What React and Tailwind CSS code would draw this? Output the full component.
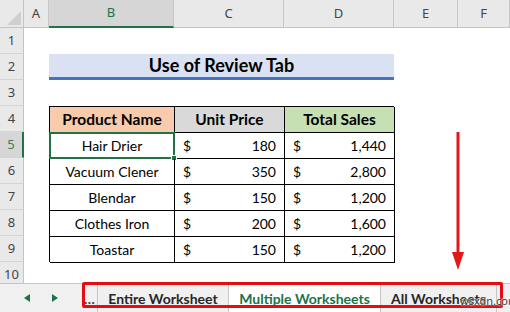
import React from 'react'

const rows = [
  { name: 'Hair Drier', price: '180', total: '1,440' },
  { name: 'Vacuum Clener', price: '350', total: '2,800' },
  { name: 'Blendar', price: '150', total: '1,200' },
  { name: 'Clothes Iron', price: '200', total: '1,600' },
  { name: 'Toastar', price: '150', total: '1,200' },
]

const colHeads = [
  { label: 'A', active: false },
  { label: 'B', active: true },
  { label: 'C', active: false },
  { label: 'D', active: false },
  { label: 'E', active: false },
  { label: 'F', active: false },
]

const cellFont = { fontFamily: 'Lato, "Open Sans", sans-serif' }

const App = () => {
  return (
    <div className="w-[510px] h-[312px] overflow-hidden bg-white flex flex-col relative" style={{ fontFamily: '"Noto Sans", "Open Sans", sans-serif' }}>
      {/* sheet area */}
      <div className="h-[283px] overflow-hidden grid grid-cols-[24px_25px_125px_110px_110px_64px_52px] grid-rows-[28px_repeat(10,26px)]">
        {/* corner */}
        <div className="bg-[#e9e9e9] border-r border-b border-[#c4c4c4] flex items-end justify-end pr-[2px] pb-[2px]">
          <svg width="14" height="14" viewBox="0 0 14 14">
            <polygon points="14,0 14,14 0,14" fill="#cfcfcf" />
          </svg>
        </div>
        {colHeads.map((c) => (
          <div
            key={c.label}
            className={`flex items-center justify-center text-[13px] border-r border-[#c8c8c8] ${
              c.active
                ? 'bg-[#d6d6d6] text-[#217346] border-b-2 border-b-[#217346]'
                : 'bg-[#e9e9e9] text-[#444] border-b border-b-[#c4c4c4]'
            }`}
          >
            {c.label}
          </div>
        ))}

        {/* row headers */}
        {Array.from({ length: 10 }, (_, i) => (
          <div
            key={i}
            style={{ gridRowStart: i + 2, gridColumnStart: 1 }}
            className={`flex items-center justify-center text-[13px] border-b border-[#d4d4d4] ${
              i === 4
                ? 'bg-[#d6d6d6] text-[#3d7a55] border-r-2 border-r-[#217346]'
                : 'bg-[#e9e9e9] text-[#444] border-r border-r-[#c4c4c4]'
            }`}
          >
            {i + 1}
          </div>
        ))}

        {/* title B2:D2 */}
        <div className="row-start-3 col-start-3 col-span-3 bg-[#d9e1f2] border-b-[3px] border-[#4472c4] flex items-center justify-center text-[18px] font-bold text-black" style={cellFont}>
          Use of Review Tab
        </div>

        {/* table B4:D9 */}
        <div className="row-start-5 row-span-6 col-start-3 col-span-3 grid grid-cols-[125px_110px_110px] grid-rows-[repeat(6,26px)] border-t border-l border-black text-[14px] text-black" style={cellFont}>
          <div className="bg-[#f8cbad] border-r border-b border-black flex items-center justify-center font-bold text-[15.5px]">Product Name</div>
          <div className="bg-[#d9d9d9] border-r border-b border-black flex items-center justify-center font-bold text-[15.5px]">Unit Price</div>
          <div className="bg-[#c6e0b4] border-r border-b border-black flex items-center justify-center font-bold text-[15.5px]">Total Sales</div>
          {rows.map((r, i) => (
            <React.Fragment key={r.name}>
              <div className="relative border-r border-b border-black flex items-center justify-center">
                {r.name}
                {i === 0 && (
                  <div className="absolute -left-[1px] -top-[1px] -right-[1px] -bottom-[1px] border-2 border-[#217346]">
                    <div className="absolute -right-[4px] -bottom-[4px] w-[6px] h-[6px] bg-[#217346] border border-white" />
                  </div>
                )}
              </div>
              <div className="border-r border-b border-black flex items-center justify-between px-[8px]">
                <span>$</span>
                <span>{r.price}</span>
              </div>
              <div className="border-r border-b border-black flex items-center justify-between px-[8px]">
                <span>$</span>
                <span>{r.total}</span>
              </div>
            </React.Fragment>
          ))}
        </div>
      </div>

      {/* sheet tab bar */}
      <div className="flex-1 bg-[#f0f0f0] border-t border-[#c6c6c6] flex items-stretch text-[14px]" style={cellFont}>
        <div className="w-[82px] flex items-center pl-[24px] gap-[22px]">
          <svg width="6" height="8" viewBox="0 0 6 8"><polygon points="6,0 6,8 0,4" fill="#217346" /></svg>
          <svg width="6" height="8" viewBox="0 0 6 8"><polygon points="0,0 0,8 6,4" fill="#217346" /></svg>
        </div>
        <div className="w-[16px] flex items-center justify-center font-bold text-[#444] border-r border-[#c6c6c6]">…</div>
        <div className="w-[131px] flex items-center justify-center font-bold text-[#262626] border-r border-[#c6c6c6]">Entire Worksheet</div>
        <div className="w-[152px] flex items-center justify-center font-bold text-[#217346] bg-white border-r border-[#c6c6c6]">Multiple Worksheets</div>
        <div className="w-[116px] flex items-center justify-center font-bold text-[#262626] border-r border-[#c6c6c6]">All Worksheets</div>
      </div>

      {/* red highlight box */}
      <div className="absolute left-[82px] top-[282px] w-[421px] h-[26px] border-[3px] border-[#e40d12] rounded-[2px] pointer-events-none" />

      {/* red arrow */}
      <svg className="absolute left-[450px] top-[132px]" width="16" height="140" viewBox="0 0 16 140">
        <line x1="8" y1="0" x2="8" y2="124" stroke="#e01818" strokeWidth="3" />
        <polygon points="2,120 14,120 8,138" fill="#e01818" />
      </svg>

      {/* watermark */}
      <div className="absolute left-[460px] top-[295px] text-[11px] text-[#3a3a3a] leading-none" style={{ textShadow: '0 0 2px #fff, 0 0 2px #fff' }}>
        wsxdn.com
      </div>
    </div>
  )
}

export default App
